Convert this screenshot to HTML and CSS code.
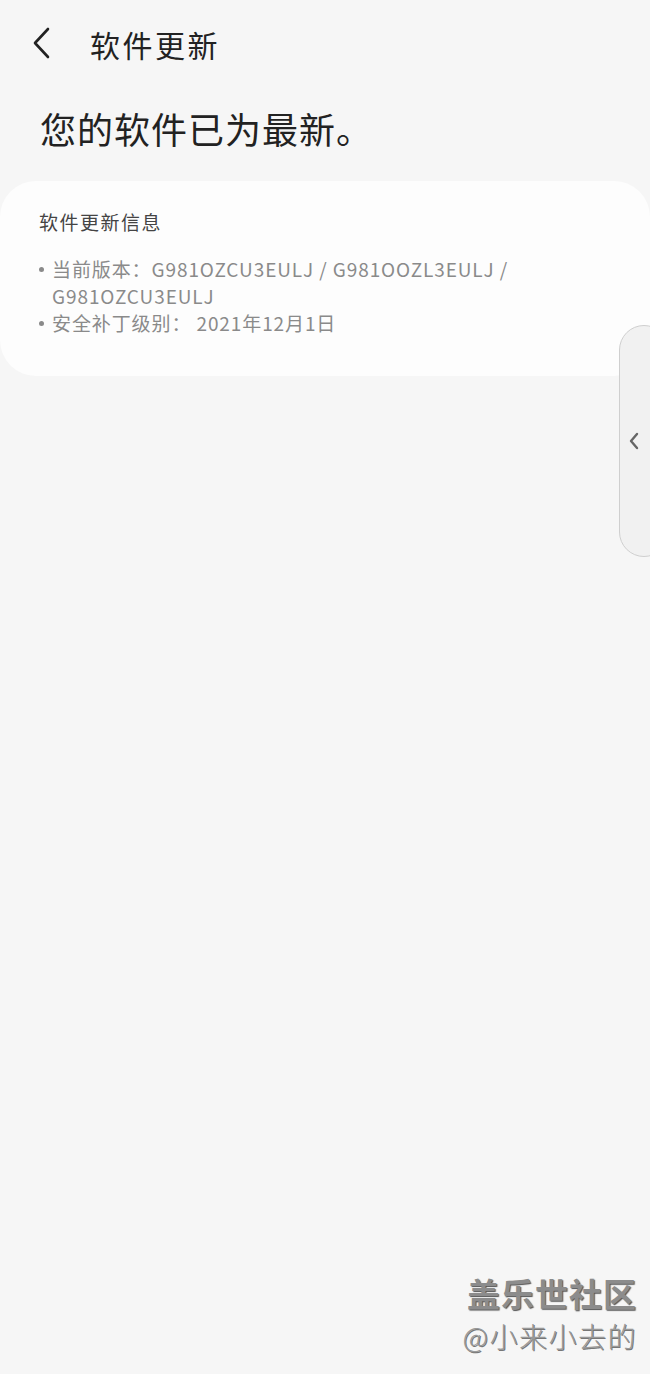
FILE: index.html
```html
<!DOCTYPE html>
<html lang="zh-CN">
<head>
    <meta charset="UTF-8">
    <meta name="viewport" content="width=device-width, initial-scale=1.0">
    <title>软件更新</title>
    <link rel="stylesheet" href="styles.css">
</head>
<body>

<div class="top-bar">
    <svg class="back-icon" width="20" height="32" viewBox="0 0 20 32">
        <path d="M16 2 L3 16 L16 30" fill="none" stroke="#222" stroke-width="2.6" stroke-linecap="round" stroke-linejoin="round"/>
    </svg>
    <span class="top-title">软件更新</span>
</div>

<h1 class="status">您的软件已为最新。</h1>

<div class="info-card">
    <div class="info-title">软件更新信息</div>
    <ul class="info-list">
        <li>当前版本：G981OZCU3EULJ / G981OOZL3EULJ / G981OZCU3EULJ</li>
        <li>安全补丁级别： 2021年12月1日</li>
    </ul>
</div>

<div class="edge-handle">
    <svg width="12" height="18" viewBox="0 0 12 18">
        <path d="M9 2 L3 9 L9 16" fill="none" stroke="#666" stroke-width="2.4" stroke-linecap="round" stroke-linejoin="round"/>
    </svg>
</div>

<div class="watermark">
    <div class="wm-big">盖乐世社区</div>
    <div class="wm-small">@小来小去的</div>
</div>

</body>
</html>
```

FILE: styles.css
```css
body {
    margin: 0;
    width: 650px;
    height: 1374px;
    background-color: #f6f6f6;
    font-family: "Noto Sans CJK SC", "Noto Sans", sans-serif;
    color: #222222;
    position: relative;
    overflow: hidden;
}
.top-bar {
    display: flex;
    align-items: center;
    height: 88px;
    padding-left: 32px;
}
.back-icon {
    margin-top: -2px;
}
.top-title {
    margin-left: 38px;
    font-size: 30px;
    letter-spacing: 2.5px;
    color: #222222;
}
.status {
    margin: 10px 0 0 40px;
    font-size: 36px;
    font-weight: normal;
    letter-spacing: 1px;
    line-height: 60px;
    color: #222222;
}
.info-card {
    margin-top: 23px;
    background-color: #fdfdfd;
    border-radius: 36px;
    padding: 26px 39px 40px 39px;
    height: 129px;
}
.info-title {
    font-size: 19px;
    letter-spacing: 1.5px;
    color: #444444;
    line-height: 30px;
}
.info-list {
    list-style: none;
    margin: 18px 0 0 0;
    padding: 0;
    color: #8a8a8a;
    font-size: 19px;
    line-height: 27px;
    width: 490px;
}
.info-list li {
    padding-left: 13px;
    position: relative;
    letter-spacing: 0.9px;
}
.info-list li::before {
    content: "";
    position: absolute;
    left: 0;
    top: 12px;
    width: 5px;
    height: 5px;
    border-radius: 50%;
    background-color: #8a8a8a;
}
.edge-handle {
    position: absolute;
    top: 325px;
    left: 619px;
    width: 50px;
    height: 232px;
    box-sizing: border-box;
    border: 1.5px solid #cfcfcf;
    border-radius: 28px;
    background-color: #f1f1f1;
    display: flex;
    align-items: center;
    padding-left: 8px;
}
.watermark {
    position: absolute;
    right: 13px;
    top: 1270px;
    text-align: right;
    color: #8c8c8c;
}
.wm-big {
    font-size: 33px;
    font-weight: bold;
    line-height: 46px;
    letter-spacing: 1px;
    text-shadow: 1px 1px 1px #555555;
}
.wm-small {
    font-size: 28px;
    font-weight: 300;
    line-height: 40px;
    letter-spacing: 1.5px;
    color: #999999;
    text-shadow: 1px 1px 0 #777777;
}
```
